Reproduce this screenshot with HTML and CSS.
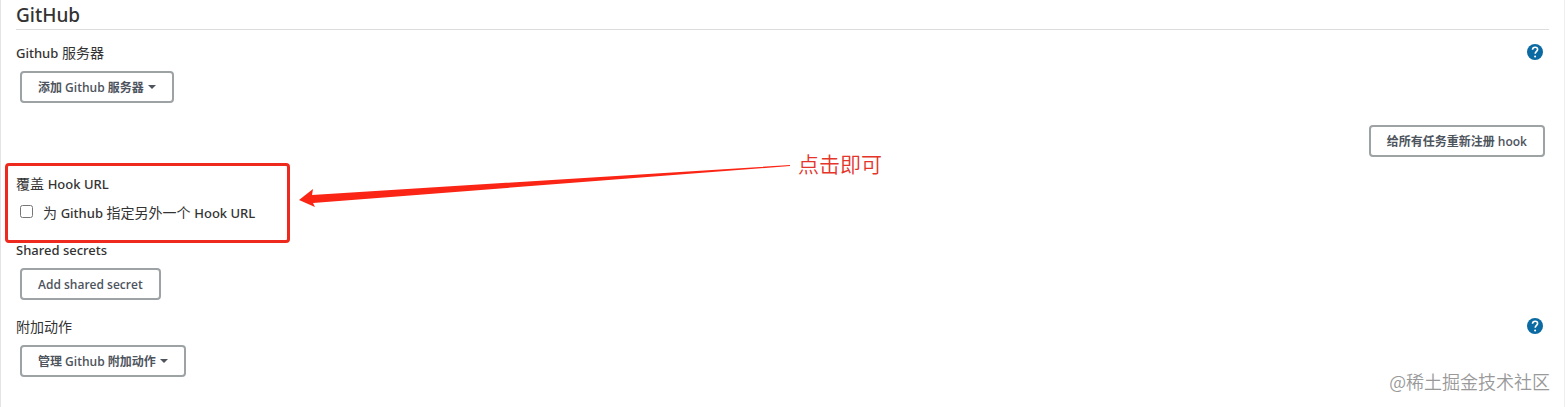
FILE: index.html
```html
<!DOCTYPE html>
<html lang="zh-CN">
<head>
  <meta charset="UTF-8">
  <title>GitHub</title>
  <link rel="stylesheet" href="styles.css">
</head>
<body>

  <form class="config">
    <h1 class="section-title">GitHub</h1>

    <!-- servers -->
    <div class="entry">
      <div class="entry-head">
        <span class="entry-label"><b>Github</b> 服务器</span>
        <button type="button" class="help" aria-label="Github 服务器">
          <svg viewBox="0 0 16 16" width="16" height="16">
            <circle cx="8" cy="8" r="8" fill="#0b6aa2"/>
            <path d="M5.5 5.7C5.6 4.2 6.6 3.3 8.1 3.3c1.4 0 2.5.9 2.5 2.2 0 1.9-2.4 2-2.4 4.3" fill="none" stroke="#fff" stroke-width="1.6"/>
            <circle cx="8.1" cy="12.6" r="1" fill="#fff"/>
          </svg>
        </button>
      </div>
      <button type="button" class="btn">添加 Github 服务器<span class="caret"></span></button>
    </div>

    <div class="actions">
      <button type="button" class="btn">给所有任务重新注册 hook</button>
    </div>

    <!-- hook url -->
    <div class="entry hook">
      <div class="entry-head">
        <span class="entry-label">覆盖 <b>Hook URL</b></span>
      </div>
      <div class="check">
        <input type="checkbox" id="hookUrl" name="hookUrl">
        <label for="hookUrl">为 <b>Github</b> 指定另外一个 <b>Hook URL</b></label>
      </div>
      <div class="mark"></div>
      <svg class="arrow" viewBox="0 0 492 46" width="492" height="46">
        <path d="M0 36L14 25L13 31L491 1L491 2L14 39L16 43Z" fill="#fb2516"/>
      </svg>
      <span class="note">点击即可</span>
    </div>

    <!-- secrets -->
    <div class="entry">
      <div class="entry-head">
        <span class="entry-label"><b>Shared secrets</b></span>
      </div>
      <button type="button" class="btn">Add shared secret</button>
    </div>

    <!-- extra actions -->
    <div class="entry">
      <div class="entry-head">
        <span class="entry-label">附加动作</span>
        <button type="button" class="help" aria-label="附加动作">
          <svg viewBox="0 0 16 16" width="16" height="16">
            <circle cx="8" cy="8" r="8" fill="#0b6aa2"/>
            <path d="M5.5 5.7C5.6 4.2 6.6 3.3 8.1 3.3c1.4 0 2.5.9 2.5 2.2 0 1.9-2.4 2-2.4 4.3" fill="none" stroke="#fff" stroke-width="1.6"/>
            <circle cx="8.1" cy="12.6" r="1" fill="#fff"/>
          </svg>
        </button>
      </div>
      <button type="button" class="btn">管理 Github 附加动作<span class="caret"></span></button>
    </div>

    <div class="watermark">@稀土掘金技术社区</div>
  </form>

</body>
</html>
```
FILE: styles.css
```css
* {
  box-sizing: border-box;
}
body {
  margin: 0;
  background: #fff;
  color: #333;
  font-family: "Noto Sans", "Noto Sans CJK SC", sans-serif;
  font-size: 14px;
  line-height: 20px;
}
.config {
  position: relative;
  min-height: 100vh;
  padding: 0 15px;
  border-left: 1px solid #e4e4e4;
  border-right: 1px solid #eee;
}
.section-title {
  margin: 0 0 13px;
  height: 30px;
  border-bottom: 1px solid #dcdcdc;
  font-size: 19px;
  font-weight: 500;
  line-height: 30px;
}
.entry {
  margin-bottom: 17px;
}
.entry-head {
  display: flex;
  justify-content: space-between;
  align-items: center;
  height: 20px;
  margin-bottom: 8px;
}
/* latin words are a bit heavier than the chinese text */
.entry-label b,
.check b {
  font-size: 13px;
  font-weight: 500;
}
.help {
  width: 16px;
  height: 16px;
  margin: 0 6px 2px 0;
  padding: 0;
  border: none;
  background: none;
  cursor: pointer;
}
.help svg {
  display: block;
}
.btn {
  display: flex;
  align-items: center;
  height: 32px;
  margin: 0 4px;
  padding: 0 16px;
  border: 2px solid #9da2a5;
  border-radius: 4px;
  background: #fff;
  color: #4d545d;
  font-family: "Open Sans", "Noto Sans CJK SC", sans-serif;
  font-size: 12px;
  font-weight: 600;
  cursor: pointer;
}
.caret {
  margin-left: 4px;
  border: 4px solid transparent;
  border-top-color: #4d545d;
  border-bottom: none;
}
.actions {
  display: flex;
  justify-content: flex-end;
  margin: 22px 0 17px;
}

.hook {
  position: relative;
}
.check {
  display: flex;
  align-items: center;
  height: 21px;
}
.check input {
  width: 13px;
  height: 13px;
  margin: 0 10px 2px 4px;
}

/* highlight, arrow and note lie over the form */
.mark {
  position: absolute;
  top: -11px;
  left: -11px;
  width: 285px;
  height: 80px;
  border: 3px solid #ee2a1f;
  border-radius: 4px;
  pointer-events: none;
}
.arrow {
  position: absolute;
  top: -10px;
  left: 283px;
}
.note {
  position: absolute;
  top: -22px;
  left: 782px;
  color: #e5352b;
  font-family: "Noto Sans CJK SC", sans-serif;
  font-size: 21px;
  font-weight: 350;
  line-height: 22px;
}
.watermark {
  position: absolute;
  right: 14px;
  bottom: 15px;
  color: #999;
  font-family: "Noto Sans CJK SC", sans-serif;
  font-size: 18px;
  font-weight: 350;
  line-height: 22px;
}
```
